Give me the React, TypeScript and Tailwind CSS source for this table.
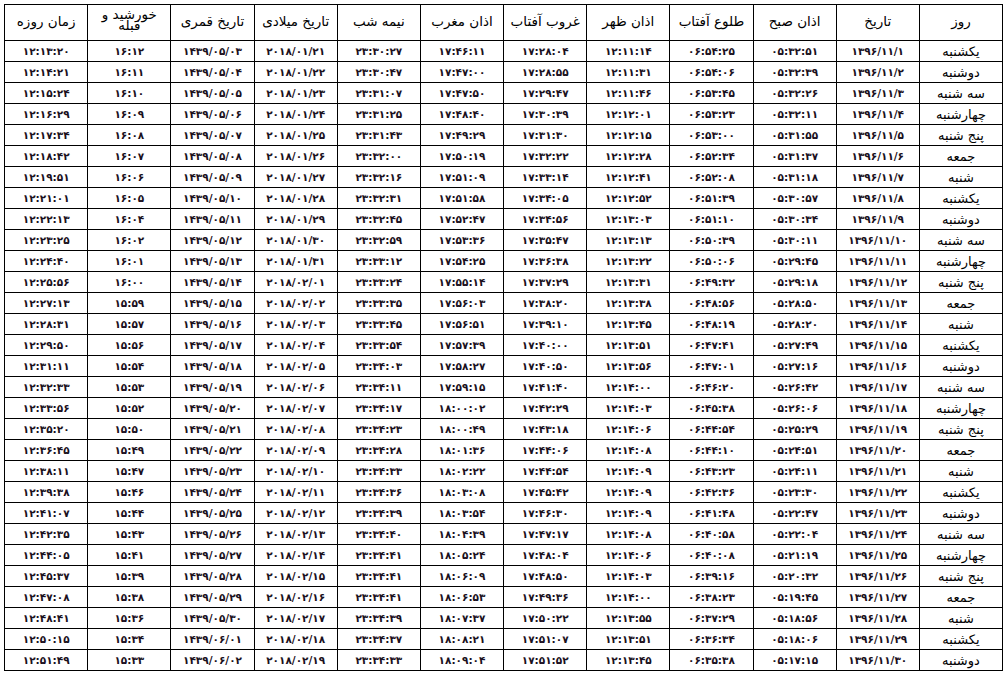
import React from "react";

const fa = (s: string) => s.replace(/[0-9]/g, (d) => "۰۱۲۳۴۵۶۷۸۹"[Number(d)]);

const headers = [
  "روز",
  "تاریخ",
  "اذان صبح",
  "طلوع آفتاب",
  "اذان ظهر",
  "غروب آفتاب",
  "اذان مغرب",
  "نیمه شب",
  "تاریخ میلادی",
  "تاریخ قمری",
  "خورشید و قبله",
  "زمان روزه",
];

const days = ["یکشنبه", "دوشنبه", "سه شنبه", "چهارشنبه", "پنج شنبه", "جمعه", "شنبه"];

const raw = `05:32:51 06:54:25 12:11:14 17:28:04 17:46:11 23:30:27 2018/01/21 1439/05/03 16:12 12:13:20
05:32:39 06:54:06 12:11:31 17:28:55 17:47:00 23:30:47 2018/01/22 1439/05/04 16:11 12:14:21
05:32:26 06:53:45 12:11:46 17:29:47 17:47:50 23:31:07 2018/01/23 1439/05/05 16:10 12:15:24
05:32:11 06:53:23 12:12:01 17:30:39 17:48:40 23:31:25 2018/01/24 1439/05/06 16:09 12:16:29
05:31:55 06:53:00 12:12:15 17:31:30 17:49:29 23:31:43 2018/01/25 1439/05/07 16:08 12:17:34
05:31:37 06:52:34 12:12:28 17:32:22 17:50:19 23:32:00 2018/01/26 1439/05/08 16:07 12:18:42
05:31:18 06:52:08 12:12:41 17:33:14 17:51:09 23:32:16 2018/01/27 1439/05/09 16:06 12:19:51
05:30:57 06:51:39 12:12:52 17:34:05 17:51:58 23:32:31 2018/01/28 1439/05/10 16:05 12:21:01
05:30:34 06:51:10 12:13:03 17:34:56 17:52:47 23:32:45 2018/01/29 1439/05/11 16:04 12:22:13
05:30:11 06:50:39 12:13:13 17:35:47 17:53:36 23:32:59 2018/01/30 1439/05/12 16:02 12:23:25
05:29:45 06:50:06 12:13:22 17:36:38 17:54:25 23:33:12 2018/01/31 1439/05/13 16:01 12:24:40
05:29:18 06:49:32 12:13:31 17:37:29 17:55:14 23:33:24 2018/02/01 1439/05/14 16:00 12:25:56
05:28:50 06:48:56 12:13:38 17:38:20 17:56:03 23:33:35 2018/02/02 1439/05/15 15:59 12:27:13
05:28:20 06:48:19 12:13:45 17:39:10 17:56:51 23:33:45 2018/02/03 1439/05/16 15:57 12:28:31
05:27:49 06:47:41 12:13:51 17:40:00 17:57:39 23:33:54 2018/02/04 1439/05/17 15:56 12:29:50
05:27:16 06:47:01 12:13:56 17:40:50 17:58:27 23:34:03 2018/02/05 1439/05/18 15:54 12:31:11
05:26:42 06:46:20 12:14:00 17:41:40 17:59:15 23:34:11 2018/02/06 1439/05/19 15:53 12:32:33
05:26:06 06:45:38 12:14:03 17:42:29 18:00:02 23:34:17 2018/02/07 1439/05/20 15:52 12:33:56
05:25:29 06:44:54 12:14:06 17:43:18 18:00:49 23:34:23 2018/02/08 1439/05/21 15:50 12:35:20
05:24:51 06:44:10 12:14:08 17:44:06 18:01:36 23:34:28 2018/02/09 1439/05/22 15:49 12:36:45
05:24:11 06:43:23 12:14:09 17:44:54 18:02:22 23:34:33 2018/02/10 1439/05/23 15:47 12:38:11
05:23:30 06:42:36 12:14:09 17:45:42 18:03:08 23:34:36 2018/02/11 1439/05/24 15:46 12:39:38
05:22:47 06:41:48 12:14:09 17:46:30 18:03:54 23:34:39 2018/02/12 1439/05/25 15:44 12:41:07
05:22:04 06:40:58 12:14:08 17:47:17 18:04:39 23:34:40 2018/02/13 1439/05/26 15:43 12:42:35
05:21:19 06:40:08 12:14:06 17:48:04 18:05:24 23:34:41 2018/02/14 1439/05/27 15:41 12:44:05
05:20:32 06:39:16 12:14:03 17:48:50 18:06:09 23:34:41 2018/02/15 1439/05/28 15:39 12:45:37
05:19:45 06:38:23 12:14:00 17:49:36 18:06:53 23:34:41 2018/02/16 1439/05/29 15:38 12:47:08
05:18:56 06:37:29 12:13:55 17:50:22 18:07:37 23:34:39 2018/02/17 1439/05/30 15:36 12:48:41
05:18:06 06:36:34 12:13:51 17:51:07 18:08:21 23:34:37 2018/02/18 1439/06/01 15:34 12:50:15
05:17:15 06:35:38 12:13:45 17:51:52 18:09:04 23:34:33 2018/02/19 1439/06/02 15:33 12:51:49`;

const rows = raw.split("\n").map((line, i) => ({
  day: days[i % 7],
  date: `1396/11/${i + 1}`,
  vals: line.trim().split(/\s+/),
}));

function Num({ v }: { v: string }) {
  return (
    <td className="border border-black p-0">
      <div className="h-[20px] flex items-center justify-center overflow-hidden">
        <span dir="ltr" className="text-[10.5px] font-bold tracking-[1px] leading-none text-[#1a1020]">
          {fa(v)}
        </span>
      </div>
    </td>
  );
}

export default function App() {
  return (
    <div className="bg-white w-[1006px] h-[675px] pt-[4px] pl-[4px] overflow-hidden">
      <table
        dir="rtl"
        className="table-fixed border-collapse border border-black w-[999px] text-black"
        style={{ fontFamily: '"DejaVu Sans", sans-serif' }}
      >
        <thead>
          <tr>
            {headers.map((h) => (
              <th key={h} className="border border-black font-normal p-0">
                <div className="h-[35px] flex items-center justify-center overflow-hidden text-[13.5px] leading-[11px] text-center">
                  {h === "خورشید و قبله" ? (
                    <span className="inline-block w-[64px] relative top-[-3px]">{h}</span>
                  ) : (
                    <span className="relative top-[-1px]">{h}</span>
                  )}
                </div>
              </th>
            ))}
          </tr>
        </thead>
        <tbody>
          {rows.map((r, i) => (
            <tr key={i}>
              <td className="border border-black p-0">
                <div className="h-[20px] flex items-center justify-center overflow-hidden text-[13px] leading-none">
                  {r.day}
                </div>
              </td>
              <Num v={r.date} />
              {r.vals.map((v, j) => (
                <Num key={j} v={v} />
              ))}
            </tr>
          ))}
        </tbody>
      </table>
    </div>
  );
}
